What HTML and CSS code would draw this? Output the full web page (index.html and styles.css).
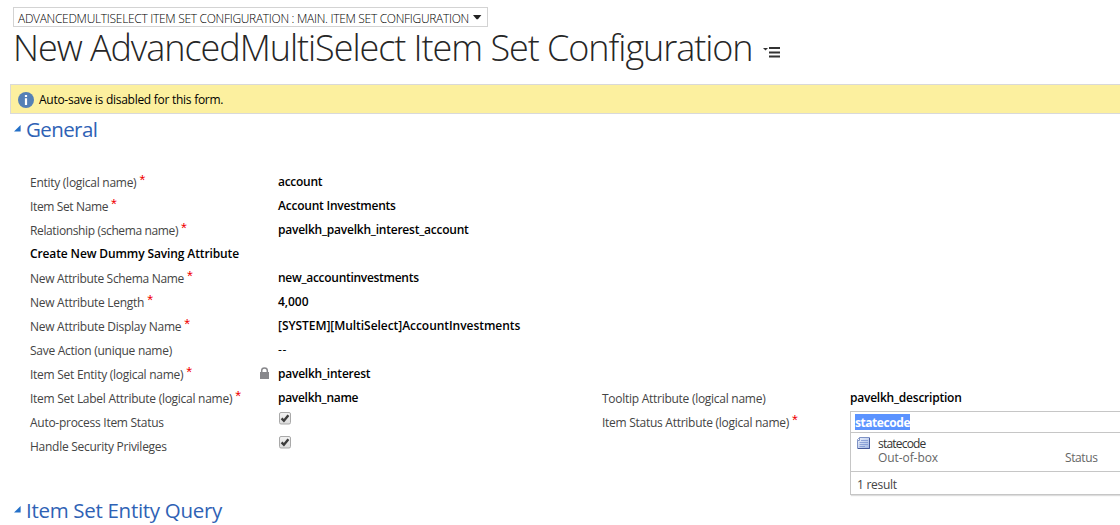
FILE: index.html
```html
<!DOCTYPE html>
<html lang="en">
<head>
<meta charset="utf-8">
<title>New AdvancedMultiSelect Item Set Configuration</title>
<link rel="stylesheet" href="styles.css">
</head>
<body>
<header class="header">
  <div class="form-picker">
    <span class="form-picker-text">ADVANCEDMULTISELECT ITEM SET CONFIGURATION : MAIN. ITEM SET CONFIGURATION</span>
    <svg class="picker-arrow" width="9" height="5" viewBox="0 0 9 5"><path d="M0 0H8.4L4.9 4.3H3.5Z" fill="#222"/></svg>
  </div>
  <div class="title-row">
    <h1 class="title">New AdvancedMultiSelect Item Set Configuration</h1>
    <svg class="title-menu" width="18" height="11" viewBox="0 0 18 11"><path d="M0 1H5L2.5 3.5Z" fill="#333"/><path d="M6 0H17V2H6ZM6 4.5H17V6.5H6ZM6 8.5H17V10.5H6Z" fill="#333"/></svg>
  </div>
</header>

<div class="notice">
  <svg class="info" width="16" height="16" viewBox="0 0 16 16"><circle cx="8" cy="8" r="8" fill="#5480b6"/><path d="M6.9 3H9.1V5H6.9ZM6.9 6.3H9.1V13H6.9Z" fill="#fff"/></svg>
  <span>Auto-save is disabled for this form.</span>
</div>

<section class="section">
  <h2 class="heading heading-general">
    <svg class="twisty" width="7" height="7" viewBox="0 0 7 7"><path d="M0 6.5L6.6 0V6.5Z" fill="#2470c8"/></svg>General
  </h2>
  <div class="columns">
    <div class="fields">
      <div class="label">Entity (logical name)<span class="req">*</span></div><div class="value tight">account</div>
      <div class="label tight">Item Set Name<span class="req">*</span></div><div class="value">Account Investments</div>
      <div class="label tight">Relationship (schema name)<span class="req">*</span></div><div class="value">pavelkh_pavelkh_interest_account</div>
      <div class="label subhead">Create New Dummy Saving Attribute</div><div class="value"></div>
      <div class="label schema">New Attribute Schema Name<span class="req">*</span></div><div class="value tight">new_accountinvestments</div>
      <div class="label">New Attribute Length<span class="req">*</span></div><div class="value loose">4,000</div>
      <div class="label">New Attribute Display Name<span class="req">*</span></div><div class="value loose">[SYSTEM][MultiSelect]AccountInvestments</div>
      <div class="label">Save Action (unique name)</div><div class="value dashes">--</div>
      <div class="label">Item Set Entity (logical name)<span class="req">*</span>
        <svg class="lock" width="9" height="12" viewBox="0 0 9 12"><path d="M1.7 6V3.6C1.7 0 7.3 0 7.3 3.6V6" fill="none" stroke="#87878b" stroke-width="1.5"/><path d="M0 5H9V12H0Z" fill="#87878b"/></svg>
      </div><div class="value">pavelkh_interest</div>
      <div class="label">Item Set Label Attribute (logical name)<span class="req">*</span></div><div class="value tight">pavelkh_name</div>
      <div class="label">Auto-process Item Status</div>
      <div class="check"><svg width="13" height="14" viewBox="0 0 13 14"><use href="#tick"/></svg></div>
      <div class="label">Handle Security Privileges</div>
      <div class="check"><svg width="13" height="14" viewBox="0 0 13 14">
        <defs><linearGradient id="face" x2="0" y2="1"><stop stop-color="#f2f2f2"/><stop offset="1" stop-color="#dcdcdc"/></linearGradient></defs>
        <g id="tick"><rect x="0.5" y="0.5" width="11" height="11.5" rx="1.5" fill="url(#face)" stroke="#a9a9a9"/><path d="M2.6 6.4L4.9 8.8L9.4 3.2" fill="none" stroke="#3c3c3c" stroke-width="2.4"/></g></svg></div>
    </div>
    <div class="fields fields-right">
      <div class="label">Tooltip Attribute (logical name)</div><div class="value">pavelkh_description</div>
      <div class="label">Item Status Attribute (logical name)<span class="req">*</span></div>
      <div class="lookup">
        <div class="lookup-input"><span class="selected">statecode</span></div>
        <div class="lookup-menu">
          <div class="option">
            <svg width="13" height="12" viewBox="0 0 13 12"><defs><linearGradient id="page" x2="1" y2="1"><stop stop-color="#f0f5fe"/><stop offset="1" stop-color="#9fb4e2"/></linearGradient></defs><path d="M2.5 0.5H12.5V11.5H0.5V2.5Z" fill="url(#page)" stroke="#7f93c6"/><path d="M12.5 1V11.5H1" fill="none" stroke="#45599a"/><path d="M0.5 3.5H2.5V0.5" fill="#fff" stroke="#7f93c6"/><path d="M4 3.5H11M2.5 5.5H11M2.5 7.5H11M2.5 9.5H8" stroke="#7d96d2" stroke-width=".8"/></svg>
            <div class="option-text"><div class="option-name">statecode</div><div class="option-info"><span class="origin">Out-of-box</span><span class="kind">Status</span></div></div>
          </div>
          <div class="result-count">1 result</div>
        </div>
      </div>
    </div>
  </div>
</section>

<section class="section query">
  <h2 class="heading">
    <svg class="twisty" width="7" height="7" viewBox="0 0 7 7"><path d="M0 6.5L6.6 0V6.5Z" fill="#2470c8"/></svg>Item Set Entity Query
  </h2>
</section>
</body>
</html>
```
FILE: styles.css
```css
* { box-sizing: border-box; }
body {
  margin: 0;
  height: 525px;
  overflow: hidden;
  background: #fff;
  color: #000;
  font: 12px/24px "Open Sans", "Noto Sans", sans-serif;
  letter-spacing: -0.27px;
  white-space: nowrap;
}
svg { display: block; flex: none; }

.header { height: 84px; padding: 7px 0 0 13px; }
.form-picker {
  display: flex;
  width: 475px;
  height: 20px;
  padding-left: 4px;
  border: 1px solid #d3d3d3;
  line-height: 22px;
  font-weight: 300;
  letter-spacing: -0.3px;
}
.form-picker-text { width: 455px; }
.picker-arrow { margin-top: 7px; }
.title-row { display: flex; height: 44px; }
.title {
  width: 750px;
  margin: 0;
  color: #262626;
  font-size: 36px;
  line-height: 42px;
  font-weight: 300;
  letter-spacing: -1.05px;
}
.title-menu { margin-top: 20px; }

.notice {
  display: flex;
  gap: 5px;
  height: 30px;
  margin-left: 10px;
  padding-left: 7px;
  background: #fcf09f;
  border: 1px solid #d9d9d9;
  border-right: 0;
  line-height: 30px;
}
.info { margin-top: 7px; }

.section { padding-left: 14px; }
.heading {
  display: flex;
  gap: 5px;
  align-items: center;
  height: 32px;
  margin: 0;
  color: #2f62b5;
  font-size: 20.5px;
  font-weight: 400;
  line-height: 30px;
  letter-spacing: -0.3px;
}
.heading-general { height: 30px; letter-spacing: -0.6px; }
.twisty { margin-top: -1px; }

.columns { display: flex; padding: 26px 0 0 16px; }
.fields {
  display: grid;
  grid-template-columns: 248px 324px;
  grid-auto-rows: 24px;
}
.fields-right { grid-template-columns: 248px 280px; padding-top: 216px; }
.label { display: flex; color: #444; line-height: 26px; }
.value { font-weight: 600; letter-spacing: -0.23px; }
.label.tight { letter-spacing: -0.37px; }
.label.schema { letter-spacing: -0.32px; }
.value.tight { letter-spacing: -0.29px; }
.value.loose { letter-spacing: -0.05px; }
.value.dashes { font-weight: 400; letter-spacing: 0.6px; }
.label.subhead {
  color: #000;
  font-weight: 600;
  line-height: 24px;
  letter-spacing: -0.12px;
}
.req {
  padding-left: 3px;
  color: #f00000;
  font: 15px/19px "Liberation Sans", sans-serif;
  letter-spacing: 0;
}
.lock { margin: 5px 9px 0 auto; }
.check { padding: 2px 0 0 1px; }

.lookup {
  height: 84px;
  margin-top: 1px;
  border: 1px solid #c6c6c6;
  border-right: 0;
  background: #fff;
  box-shadow: 1px 1px 1px #ddd;
}
.lookup-input {
  height: 21px;
  padding: 2px 0 0 4px;
  border-bottom: 1px solid #c6c6c6;
}
.selected {
  display: block;
  width: 55px;
  height: 16px;
  background: #5b93ff;
  color: #fff;
  font-weight: 700;
  line-height: 18px;
  letter-spacing: -0.44px;
}
.option {
  display: flex;
  gap: 8px;
  height: 39px;
  padding: 4px 0 0 6px;
  border-bottom: 1px solid #c6c6c6;
  color: #333;
  line-height: 14px;
}
.option-name { letter-spacing: -0.8px; }
.option-info { display: flex; color: #666; }
.origin { width: 187px; letter-spacing: -0.08px; }
.kind { letter-spacing: -0.4px; }
.result-count { padding-left: 6px; color: #444; line-height: 26px; }

.query { padding-top: 36px; }
```
